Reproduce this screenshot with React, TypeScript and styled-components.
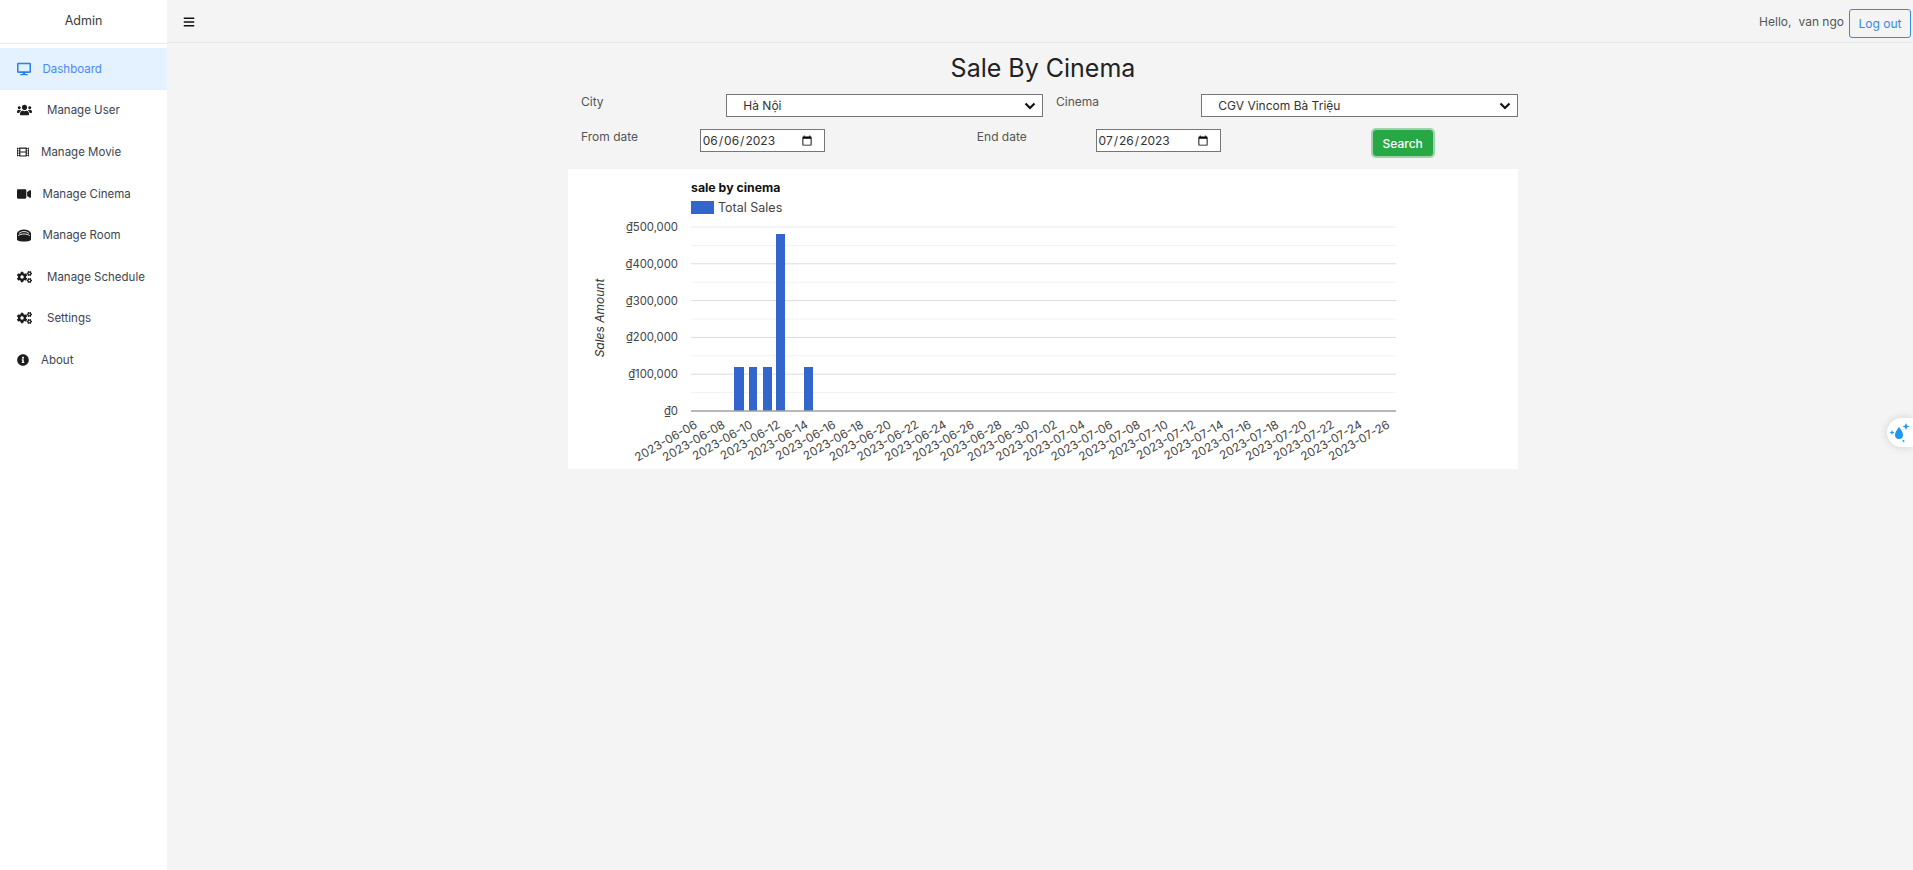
import React from "react";
import styled, { createGlobalStyle } from "styled-components";
import {
  FaBars,
  FaCogs,
  FaDesktop,
  FaFilm,
  FaInfoCircle,
  FaUsers,
  FaVideo,
} from "react-icons/fa";

const GlobalStyle = createGlobalStyle`
  html, body {
    margin: 0;
    padding: 0;
    height: 100%;
    background: #f4f4f4;
    font-family: "Inter", "Noto Sans", "Liberation Sans", sans-serif;
  }
  #root { height: 100%; }
  * { box-sizing: border-box; }
`;

const Layout = styled.div`
  display: flex;
  height: 870px;
  overflow: hidden;
  position: relative;
`;

const Sidebar = styled.aside`
  width: 167px;
  flex: none;
  background: #fff;
`;

const Brand = styled.div`
  height: 44px;
  padding-top: 12px;
  text-align: center;
  font-size: 12.5px;
  line-height: 18px;
  color: #3a3a3a;
  border-bottom: 1px solid #eaeaea;
`;

const Menu = styled.nav`
  display: flex;
  flex-direction: column;
  margin-top: 4px;
`;

const MenuItem = styled.a<{ $active?: boolean }>`
  display: flex;
  align-items: center;
  height: 41.6px;
  padding-left: 17px;
  font-size: 11.5px;
  color: ${(p) => (p.$active ? "#4a8af4" : "#3d4451")};
  background: ${(p) => (p.$active ? "#e4f1fe" : "transparent")};
`;

const MenuIcon = styled.span<{ $slot: number; $width: number; $active?: boolean }>`
  display: flex;
  flex: none;
  width: ${(p) => p.$slot}px;
  color: ${(p) => (p.$active ? "#2f80ed" : "#1c1c1c")};

  svg {
    width: ${(p) => p.$width}px;
    height: 14px;
  }
`;

const Main = styled.main`
  flex: 1;
  min-width: 0;
`;

const TopBar = styled.header`
  display: flex;
  align-items: center;
  justify-content: space-between;
  height: 42px;
  margin-top: 1px;
  padding: 0 2px 0 16px;
  border-bottom: 1px solid #e8e8e8;
`;

const MenuToggle = styled.span`
  display: flex;
  color: #111;
  font-size: 12px;
`;

const UserBox = styled.div`
  display: flex;
  align-items: center;
  gap: 5px;
  font-size: 12px;
  color: #555;
`;

const UserName = styled.span`
  display: flex;
  gap: 7px;
`;

const LogoutButton = styled.button`
  width: 62px;
  height: 29px;
  margin-top: 3px;
  padding: 0;
  font: inherit;
  color: #2f8cf0;
  background: transparent;
  border: 1px solid #2f8cf0;
  border-radius: 3px;
`;

const ContentArea = styled.div`
  padding-left: 6px;
`;

const Content = styled.section`
  width: 950px;
  margin: 0 auto;
`;

const Title = styled.h1`
  margin: 9px 0 0;
  height: 33px;
  text-align: center;
  font-size: 25px;
  line-height: 33px;
  font-weight: 400;
  color: #222;
`;

const FilterRow = styled.div`
  display: grid;
  grid-template-columns: 2fr 4fr 2fr 4fr;
  margin-top: 9px;
  height: 23px;
`;

const DateRow = styled.div`
  display: grid;
  grid-template-columns: 5fr 5fr 2fr;
  margin-top: 12px;
  height: 29px;
`;

const DateGroup = styled.div`
  display: grid;
  grid-template-columns: 30% 70%;
  align-items: start;
`;

const FieldLabel = styled.label`
  padding-left: 13px;
  font-size: 12px;
  line-height: 16px;
  color: #555;
`;

const chevron = encodeURIComponent(
  '<svg xmlns="http://www.w3.org/2000/svg" width="12" height="8" viewBox="0 0 12 8"><path d="M1.5 1.5 6 6l4.5-4.5" fill="none" stroke="#111" stroke-width="2.2"/></svg>'
);

const Select = styled.select`
  display: block;
  width: 100%;
  height: 23px;
  padding-left: 16px;
  font: 12px "Inter", sans-serif;
  color: #333;
  border: 1px solid #767676;
  border-radius: 0;
  appearance: none;
  background: #fff url("data:image/svg+xml,${chevron}") no-repeat right 6px center;
`;

const DateInput = styled.input`
  display: block;
  width: 125px;
  height: 23px;
  margin-left: 13px;
  padding: 0 9px 0 1px;
  font: 12px "Inter", sans-serif;
  color: #333;
  background: #fff;
  border: 1px solid #767676;
  border-radius: 0;
`;

const SearchCell = styled.div`
  padding: 1px 0 0 13px;
`;

const SearchButton = styled.button`
  display: block;
  width: 60px;
  height: 26px;
  padding: 0;
  font: 500 12px "Inter", sans-serif;
  color: #fff;
  background: #28a745;
  border: 1px solid #28a745;
  border-radius: 3px;
  box-shadow: 0 0 0 2px rgba(72, 180, 97, 0.5);
`;

const ChartPanel = styled.div`
  margin-top: 11px;
  height: 300px;
  background: #fff;
`;

const ChartSvg = styled.svg`
  display: block;
  font-family: "Inter", "Noto Sans", sans-serif;
`;

const DropWidget = styled.div`
  position: absolute;
  right: 0;
  top: 418px;
  display: flex;
  align-items: center;
  justify-content: center;
  width: 26px;
  height: 29px;
  background: #fff;
  border-radius: 15px 0 0 15px;
  box-shadow: 0 0 8px rgba(0, 0, 0, 0.15);
`;

const RoomIcon: React.FC = () => (
  <svg viewBox="0 0 14 14" fill="#1c1c1c">
    <path d="M0 5C1.5 2.5 4 1.5 7 1.5s5.500 1 7 3.500v7c-1.500 1-4 1.500-7 1.500s-5.500-.5-7-1.500z" />
    <path
      d="M2 5.500C3.300 4.100 5 3.600 7 3.600s3.700.5 5 1.900M1.200 7.600C3 6.400 5 6 7 6s4 .4 5.800 1.600"
      fill="none"
      stroke="#fff"
      strokeWidth="0.9"
    />
  </svg>
);

const menuItems = [
  { label: "Dashboard", icon: <FaDesktop />, slot: 25.5, width: 14, active: true },
  { label: "Manage User", icon: <FaUsers />, slot: 30, width: 15 },
  { label: "Manage Movie", icon: <FaFilm />, slot: 24, width: 12 },
  { label: "Manage Cinema", icon: <FaVideo />, slot: 25.5, width: 14 },
  { label: "Manage Room", icon: <RoomIcon />, slot: 25.5, width: 14 },
  { label: "Manage Schedule", icon: <FaCogs />, slot: 30, width: 15 },
  { label: "Settings", icon: <FaCogs />, slot: 30, width: 15 },
  { label: "About", icon: <FaInfoCircle />, slot: 24, width: 12 },
];

const yTicks = ["₫0", "₫100,000", "₫200,000", "₫300,000", "₫400,000", "₫500,000"];

// plot area, in coordinates of the chart panel
const plotLeft = 123;
const plotRight = 828;
const plotBottom = 242;
const tickStep = 36.8;

const bars = [
  { x: 166, w: 10, top: 198 },
  { x: 181, w: 8, top: 198 },
  { x: 195, w: 9, top: 198 },
  { x: 208, w: 9, top: 65 },
  { x: 236, w: 9, top: 198 },
];

const dateLabels = [
  "06-06", "06-08", "06-10", "06-12", "06-14", "06-16", "06-18", "06-20", "06-22",
  "06-24", "06-26", "06-28", "06-30", "07-02", "07-04", "07-06", "07-08", "07-10",
  "07-12", "07-14", "07-16", "07-18", "07-20", "07-22", "07-24", "07-26",
].map((d) => `2023-${d}`);

const SalesChart: React.FC = () => (
  <ChartSvg width={950} height={300} viewBox="0 0 950 300">
    <text x={123} y={23} fontSize={12.3} fontWeight={700} fill="#111">
      sale by cinema
    </text>
    <rect x={123} y={32} width={23} height={13} fill="#3366cc" />
    <text x={150} y={42.5} fontSize={12.5} fill="#444">
      Total Sales
    </text>
    <text
      transform="translate(36 149) rotate(-90)"
      fontSize={12}
      fontStyle="italic"
      fill="#333"
      textAnchor="middle"
    >
      Sales Amount
    </text>
    {yTicks.map((_, i) => (
      <g key={i}>
        {i > 0 && (
          <line
            x1={plotLeft}
            x2={plotRight}
            y1={plotBottom - i * tickStep}
            y2={plotBottom - i * tickStep}
            stroke={i === 5 ? "#ececec" : "#dcdcdc"}
          />
        )}
        {i < 5 && (
          <line
            x1={plotLeft}
            x2={plotRight}
            y1={plotBottom - (i + 0.5) * tickStep}
            y2={plotBottom - (i + 0.5) * tickStep}
            stroke="#f2f2f2"
          />
        )}
      </g>
    ))}
    {yTicks.map((t, i) => (
      <text
        key={t}
        x={110}
        y={plotBottom - i * tickStep + 4}
        fontSize={11.3}
        fill="#444"
        textAnchor="end"
      >
        {t}
      </text>
    ))}
    {bars.map((b) => (
      <rect
        key={b.x}
        x={b.x}
        y={b.top}
        width={b.w}
        height={plotBottom - b.top}
        fill="#3366cc"
      />
    ))}
    <line
      x1={plotLeft}
      x2={plotRight}
      y1={plotBottom}
      y2={plotBottom}
      stroke="#a0a0a0"
      strokeWidth={1.5}
    />
    {dateLabels.map((d, i) => (
      <text
        key={d}
        transform={`translate(${130 + i * 27.7} 258) rotate(-30)`}
        fontSize={11.8}
        fill="#444"
        textAnchor="end"
      >
        {d}
      </text>
    ))}
  </ChartSvg>
);

const App: React.FC = () => (
  <>
    <GlobalStyle />
    <Layout>
      <Sidebar>
        <Brand>Admin</Brand>
        <Menu>
          {menuItems.map((m) => (
            <MenuItem key={m.label} $active={m.active}>
              <MenuIcon $slot={m.slot} $width={m.width} $active={m.active}>
                {m.icon}
              </MenuIcon>
              {m.label}
            </MenuItem>
          ))}
        </Menu>
      </Sidebar>
      <Main>
        <TopBar>
          <MenuToggle>
            <FaBars />
          </MenuToggle>
          <UserBox>
            <UserName>
              <span>Hello,</span>
              <span>van ngo</span>
            </UserName>
            <LogoutButton>Log out</LogoutButton>
          </UserBox>
        </TopBar>
        <ContentArea>
          <Content>
            <Title>Sale By Cinema</Title>
            <FilterRow>
              <FieldLabel>City</FieldLabel>
              <Select defaultValue="hn">
                <option value="hn">Hà Nội</option>
              </Select>
              <FieldLabel>Cinema</FieldLabel>
              <Select defaultValue="cgv">
                <option value="cgv">CGV Vincom Bà Triệu</option>
              </Select>
            </FilterRow>
            <DateRow>
              <DateGroup>
                <FieldLabel>From date</FieldLabel>
                <DateInput type="date" defaultValue="2023-06-06" />
              </DateGroup>
              <DateGroup>
                <FieldLabel>End date</FieldLabel>
                <DateInput type="date" defaultValue="2023-07-26" />
              </DateGroup>
              <SearchCell>
                <SearchButton>Search</SearchButton>
              </SearchCell>
            </DateRow>
            <ChartPanel>
              <SalesChart />
            </ChartPanel>
          </Content>
        </ContentArea>
      </Main>
      <DropWidget>
        <svg width="24" height="22" viewBox="0 0 24 22" fill="#2196f3">
          <path d="M11 5c2 3 4 5 4 8a4 4 0 0 1-8 0c0-3 2-5 4-8z" />
          <path d="M18 1l1 2.5 2.5 1-2.5 1-1 2.5-1-2.5-2.5-1 2.5-1z" />
          <path d="M4 8l.7 1.8 1.8.7-1.8.7L4 13l-.7-1.8-1.8-.7 1.8-.7z" />
          <circle cx="15.5" cy="19" r="1" />
        </svg>
      </DropWidget>
    </Layout>
  </>
);

export default App;
